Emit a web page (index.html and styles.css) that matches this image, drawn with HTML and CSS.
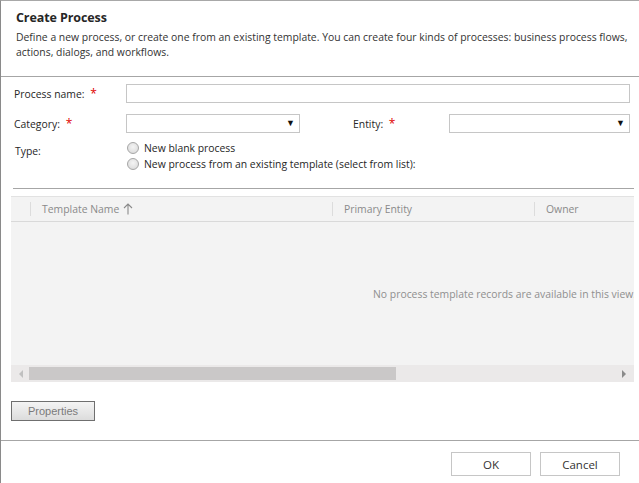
FILE: index.html
```html
<!DOCTYPE html>
<html>
<head>
<meta charset="utf-8">
<link rel="stylesheet" href="styles.css">
</head>
<body>
<div class="dialog">
  <div class="head">
    <h1 class="title">Create Process</h1>
    <p class="desc">Define a new process, or create one from an existing template. You can create four kinds of processes: business process flows, actions, dialogs, and workflows.</p>
  </div>
  <div class="form">
    <div class="row row-name">
      <span class="label">Process name: <span class="req">*</span></span>
      <div class="input input-wide"></div>
    </div>
    <div class="row row-cat">
      <span class="label">Category: <span class="req">*</span></span>
      <div class="input select select-cat"><span class="arrow">▼</span></div>
      <span class="label label-entity">Entity: <span class="req">*</span></span>
      <div class="input select select-ent"><span class="arrow">▼</span></div>
    </div>
    <div class="row row-type">
      <span class="label label-type">Type:</span>
      <div class="radios">
        <label class="radio"><span class="dot"></span>New blank process</label>
        <label class="radio"><span class="dot"></span>New process from an existing template (select from list):</label>
      </div>
    </div>
  </div>
  <div class="sep"></div>
  <div class="grid">
    <div class="grid-head">
      <div class="col col-check"></div>
      <div class="col col-name">Template Name
        <svg class="sort" width="10" height="12" viewBox="0 0 10 12"><path d="M5 11.5V1M1 5l4-4 4 4" fill="none" stroke="#8a8a8a" stroke-width="1.1"/></svg>
      </div>
      <div class="col col-ent">Primary Entity</div>
      <div class="col col-owner">Owner</div>
    </div>
    <div class="grid-body">
      <span class="empty">No process template records are available in this view.</span>
    </div>
    <div class="hscroll">
      <span class="sarrow sarrow-left"></span>
      <div class="track"><div class="thumb"></div></div>
      <span class="sarrow sarrow-right"></span>
    </div>
  </div>
  <div class="props-wrap"><button class="props">Properties</button></div>
  <div class="foot">
    <button class="btn">OK</button>
    <button class="btn">Cancel</button>
  </div>
</div>
</body>
</html>
```
FILE: styles.css
```css
* { box-sizing: border-box; }
html, body { margin: 0; padding: 0; background: #fff; }
body { width: 639px; height: 483px; overflow: hidden; font-family: "Open Sans", "Noto Sans", sans-serif; color: #262626; }
.dialog { width: 639px; height: 483px; border-left: 1px solid #8a8a8a; border-top: 1px solid #a8a8a8; display: flex; flex-direction: column; }
.head { height: 76px; border-bottom: 1px solid #a6a6a6; padding: 7px 4px 0 15px; }
.title { margin: 0; font-size: 12.5px; font-weight: 700; line-height: 20px; color: #262626; letter-spacing: -0.1px; }
.desc { margin: 2px 0 0; font-size: 10.4px; line-height: 15px; color: #333; }
.form { padding: 7px 9px 0 13px; font-size: 10.4px; color: #262626; }
.row { display: flex; align-items: center; }
.label { width: 112px; flex: none; }
.req { color: #e00000; font-size: 12px; margin-left: 3px; }
.input { height: 19px; border: 1px solid #c6c6c6; background: #fff; }
.input-wide { flex: 1; }
.row-name { height: 19px; }
.row-cat { height: 19px; margin-top: 11px; }
.select { position: relative; }
.select-cat { width: 174px; }
.select-ent { flex: 1; }
.label-entity { width: 96px; margin-left: 53px; }
.arrow { position: absolute; right: 4px; top: 1px; font-size: 9px; color: #111; }
.row-type { align-items: flex-start; margin-top: 7px; }
.label-type { padding-top: 4px; padding-left: 1px; }
.radios { display: flex; flex-direction: column; margin-left: 1px; }
.radio { display: flex; align-items: center; height: 16px; gap: 5px; }
.dot { width: 12px; height: 12px; border-radius: 50%; border: 1px solid #a6a6a6; background: radial-gradient(circle at 50% 40%, #f4f4f4, #d6d6d6); }
.sep { height: 1px; background: #a6a6a6; margin: 16px 5px 0 12px; }
.grid { margin: 7px 5px 0 10px; background: #f3f3f3; height: 186px; display: flex; flex-direction: column; }
.grid-head { height: 26px; border-bottom: 1px solid #d9d9d9; display: flex; align-items: center; font-size: 10.4px; color: #8a8a8a; border-top: 1px solid #e2e2e2; }
.col { height: 100%; display: flex; align-items: center; }
.col-check { width: 19px; }
.col-name, .col-ent, .col-owner { border-left: 1px solid #dcdcdc; height: 14px; padding-left: 11px; }
.col-name { width: 302px; }
.col-ent { width: 202px; }
.col-owner { flex: 1; }
.sort { margin-left: 4px; }
.grid-body { flex: 1; position: relative; overflow: hidden; }
.empty { position: absolute; left: 362px; top: 65px; white-space: nowrap; font-size: 10.4px; color: #8f8f8f; }
.hscroll { height: 17px; background: #ebe9e9; display: flex; align-items: center; }
.sarrow { width: 18px; height: 100%; position: relative; flex: none; }
.sarrow-left::after { content: ""; position: absolute; left: 8px; top: 5px; border-right: 4px solid #c0c0c0; border-top: 4px solid transparent; border-bottom: 4px solid transparent; }
.sarrow-right::after { content: ""; position: absolute; right: 8px; top: 5px; border-left: 4px solid #8a8a8a; border-top: 4px solid transparent; border-bottom: 4px solid transparent; }
.track { flex: 1; height: 13px; }
.thumb { width: 367px; height: 13px; background: #cac8c8; }
.props-wrap { display: flex; padding: 19px 0 0 10px; }
.props { width: 84px; height: 20px; border: 1px solid #6f6f6f; background: linear-gradient(#f4f4f4, #dcdcdc); font-family: "Liberation Sans", Arial, sans-serif; font-size: 11px; color: #7a7a7a; padding: 0; }
.foot { margin-top: 19px; border-top: 1px solid #a6a6a6; display: flex; justify-content: flex-end; gap: 9px; padding: 11px 19px 0 0; flex: 1; align-items: flex-start; }
.btn { width: 80px; height: 24px; border: 1px solid #c6c6c6; background: #fff; font-family: "Open Sans", "Noto Sans", sans-serif; font-size: 11.5px; color: #333; padding: 0; }
```
